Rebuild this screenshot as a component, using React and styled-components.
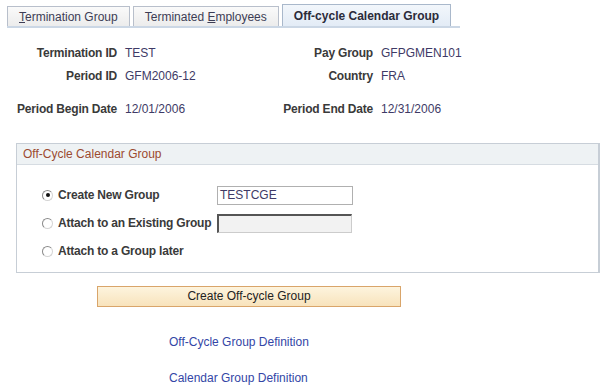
import React from "react";
import styled, { createGlobalStyle } from "styled-components";

const Global = createGlobalStyle`
  html, body { margin: 0; padding: 0; background: #ffffff; }
  body { font-family: Arial, "Liberation Sans", sans-serif; font-size: 12px; color: #333; }
`;

const Page = styled.div`
  width: 608px;
  height: 391px;
  overflow: hidden;
  position: relative;
`;

const TabBar = styled.div`
  display: flex;
  align-items: flex-end;
  gap: 3px;
  margin-left: 7px;
  width: 453px;
  height: 26px;
  border-bottom: 2px solid #cbd7e5;
`;

const Tab = styled.div`
  box-sizing: border-box;
  height: ${(p) => (p.$active ? "22px" : "20px")};
  padding: 0 11px;
  display: flex;
  align-items: center;
  border: 1px solid ${(p) => (p.$active ? "#a9b8cb" : "#b8bfcb")};
  border-bottom: none;
  background: ${(p) =>
    p.$active
      ? "linear-gradient(#f2f6fb, #e3ecf6)"
      : "linear-gradient(#fafafa, #ececec)"};
  color: ${(p) => (p.$active ? "#2b2b3a" : "#3d3d55")};
  font-weight: ${(p) => (p.$active ? "bold" : "normal")};
  font-size: 12px;
  white-space: nowrap;
  u { text-decoration: underline; }
`;

const Fields = styled.div`
  display: grid;
  grid-template-columns: 117px 150px 90px auto;
  grid-template-rows: 23px 23px 33px;
  column-gap: 8px;
  align-items: end;
  margin-top: 14px;
`;

const Label = styled.div`
  text-align: right;
  font-weight: bold;
  letter-spacing: -0.2px;
  color: #3a3a3a;
  line-height: 23px;
  white-space: nowrap;
`;

const Value = styled.div`
  color: #3e3a66;
  line-height: 23px;
  white-space: nowrap;
`;

const GroupBox = styled.div`
  margin: 22px 0 0 16px;
  width: 584px;
  box-sizing: border-box;
  border: 1px solid #c7ced6;
  border-right-width: 2px;
`;

const GroupHeader = styled.div`
  height: 20px;
  background: #eef2f4;
  border-bottom: 1px solid #d6dce2;
  color: #9c4a30;
  padding-left: 6px;
  line-height: 20px;
`;

const GroupBody = styled.div`
  padding: 16px 0 7px 25px;
  display: grid;
  grid-template-columns: 175px auto;
  grid-auto-rows: 28px;
  align-items: center;
`;

const RadioLabel = styled.label`
  display: flex;
  align-items: center;
  gap: 5px;
  font-weight: bold;
  letter-spacing: -0.2px;
  color: #3a3a3a;
  white-space: nowrap;
`;

const Radio = styled.span`
  box-sizing: border-box;
  width: 11px;
  height: 11px;
  border-radius: 50%;
  border: 1px solid #8a8a8a;
  border-right-color: #d4d4d4;
  border-bottom-color: #d4d4d4;
  background: #fff;
  display: flex;
  align-items: center;
  justify-content: center;
  &::after {
    content: "";
    width: 4px;
    height: 4px;
    border-radius: 50%;
    background: ${(p) => (p.$checked ? "#111" : "transparent")};
  }
`;

const TextBox = styled.div`
  box-sizing: border-box;
  width: ${(p) => (p.$disabled ? "135px" : "136px")};
  height: 19px;
  border: 1px solid #b0b0b0;
  ${(p) =>
    p.$disabled
      ? "border-top: 2px solid #555; border-left: 2px solid #555; border-right-color:#ccc; border-bottom-color:#ccc; background:#f2f2f2;"
      : "background:#fff;"}
  color: #3e3a66;
  padding-left: 2px;
  line-height: 17px;
`;

const Button = styled.div`
  margin: 13px 0 0 97px;
  width: 304px;
  height: 21px;
  box-sizing: border-box;
  border: 1px solid #d9a56a;
  background: linear-gradient(#fdf4de, #f8e3bc);
  color: #222;
  text-align: center;
  line-height: 19px;
`;

const Links = styled.div`
  display: flex;
  flex-direction: column;
  gap: 22px;
  margin: 28px 0 0 169px;
`;

const Link = styled.a`
  color: #3346a6;
  text-decoration: none;
  line-height: 14px;
  cursor: pointer;
`;

export default function App() {
  return (
    <Page>
      <Global />
      <TabBar>
        <Tab><span><u>T</u>ermination Group</span></Tab>
        <Tab><span>Terminated <u>E</u>mployees</span></Tab>
        <Tab $active>Off-cycle Calendar Group</Tab>
      </TabBar>
      <Fields>
        <Label>Termination ID</Label>
        <Value>TEST</Value>
        <Label>Pay Group</Label>
        <Value>GFPGMEN101</Value>
        <Label>Period ID</Label>
        <Value>GFM2006-12</Value>
        <Label>Country</Label>
        <Value>FRA</Value>
        <Label>Period Begin Date</Label>
        <Value>12/01/2006</Value>
        <Label>Period End Date</Label>
        <Value>12/31/2006</Value>
      </Fields>
      <GroupBox>
        <GroupHeader>Off-Cycle Calendar Group</GroupHeader>
        <GroupBody>
          <RadioLabel><Radio $checked />Create New Group</RadioLabel>
          <TextBox>TESTCGE</TextBox>
          <RadioLabel><Radio />Attach to an Existing Group</RadioLabel>
          <TextBox $disabled />
          <RadioLabel><Radio />Attach to a Group later</RadioLabel>
          <span />
        </GroupBody>
      </GroupBox>
      <Button>Create Off-cycle Group</Button>
      <Links>
        <Link>Off-Cycle Group Definition</Link>
        <Link>Calendar Group Definition</Link>
      </Links>
    </Page>
  );
}
